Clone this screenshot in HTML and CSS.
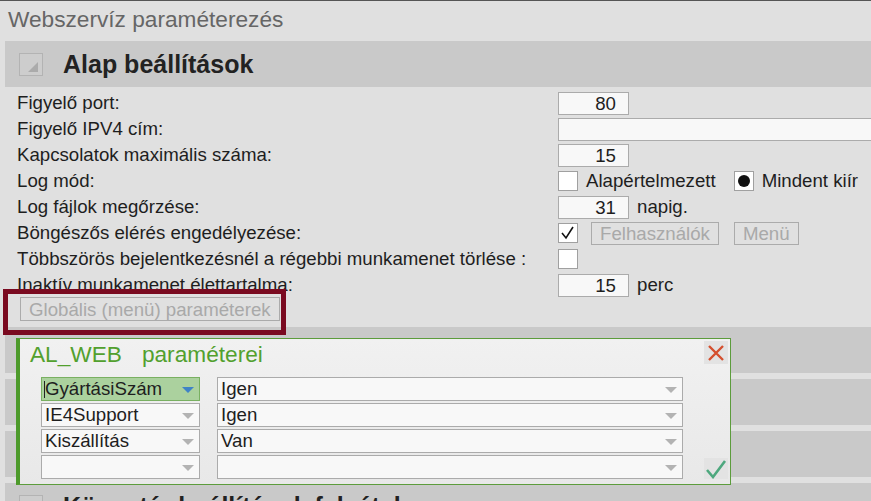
FILE: index.html
```html
<!DOCTYPE html>
<html lang="hu">
<head>
    <meta charset="UTF-8">
    <title>Webszervíz paraméterezés</title>
    <link rel="stylesheet" href="styles.css">
</head>
<body>
    <div class="page-title">Webszervíz paraméterezés</div>

    <div class="panels">
        <section class="panel">
            <div class="panel-head"><span class="toggle"></span><h2>Alap beállítások</h2></div>
            <div class="panel-body">
                <div class="row">
                    <span class="lbl">Figyelő port:</span>
                    <div class="ctrl"><span class="field num">80</span></div>
                </div>
                <div class="row">
                    <span class="lbl">Figyelő IPV4 cím:</span>
                    <div class="ctrl"><span class="field wide"></span></div>
                </div>
                <div class="row">
                    <span class="lbl">Kapcsolatok maximális száma:</span>
                    <div class="ctrl"><span class="field num">15</span></div>
                </div>
                <div class="row">
                    <span class="lbl">Log mód:</span>
                    <div class="ctrl">
                        <span class="box"></span>
                        <span class="opt">Alapértelmezett</span>
                        <span class="box radio"><span class="dot"></span></span>
                        <span>Mindent kiír</span>
                    </div>
                </div>
                <div class="row">
                    <span class="lbl">Log fájlok megőrzése:</span>
                    <div class="ctrl"><span class="field num">31</span><span>napig.</span></div>
                </div>
                <div class="row">
                    <span class="lbl">Böngészős elérés engedélyezése:</span>
                    <div class="ctrl">
                        <span class="box">
                            <svg width="18" height="18" viewBox="0 0 18 18"><polyline points="3,9 7,14 14,3" fill="none" stroke="#111" stroke-width="1.6"/></svg>
                        </span>
                        <button class="ghost-btn users">Felhasználók</button>
                        <button class="ghost-btn">Menü</button>
                    </div>
                </div>
                <div class="row">
                    <span class="lbl">Többszörös bejelentkezésnél a régebbi munkamenet törlése :</span>
                    <div class="ctrl"><span class="box"></span></div>
                </div>
                <div class="row">
                    <span class="lbl">Inaktív munkamenet élettartalma:</span>
                    <div class="ctrl"><span class="field num">15</span><span>perc</span></div>
                </div>
                <button class="ghost-btn global">Globális (menü) paraméterek</button>
                <div class="highlight"></div>
            </div>
        </section>
        <section class="panel"><div class="panel-head"><span class="toggle"></span></div></section>
        <section class="panel"><div class="panel-head"><span class="toggle"></span></div></section>
        <section class="panel"><div class="panel-head"><span class="toggle"></span></div></section>
        <section class="panel"><div class="panel-head"><span class="toggle"></span><h2>Könyvtár beállítások felvétele</h2></div></section>
    </div>

    <div class="popup">
        <div class="popup-title"><span class="app">AL_WEB</span>paraméterei</div>
        <button class="icon-btn close">
            <svg width="20" height="20" viewBox="0 0 20 20"><path d="M3 3 L17 17 M17 3 L3 17" stroke="#d5502f" stroke-width="2.4"/></svg>
        </button>
        <div class="param-rows">
            <div class="select key active"><span class="caret"></span>GyártásiSzám<span class="arrow"></span></div>
            <div class="select val">Igen<span class="arrow"></span></div>
            <div class="select key">IE4Support<span class="arrow"></span></div>
            <div class="select val">Igen<span class="arrow"></span></div>
            <div class="select key">Kiszállítás<span class="arrow"></span></div>
            <div class="select val">Van<span class="arrow"></span></div>
            <div class="select key"><span class="arrow"></span></div>
            <div class="select val"><span class="arrow"></span></div>
        </div>
        <button class="icon-btn ok">
            <svg width="22" height="20" viewBox="0 0 22 20"><polyline points="2,11 8,18 20,2" fill="none" stroke="#4ea87e" stroke-width="2.6"/></svg>
        </button>
    </div>
</body>
</html>
```

FILE: styles.css
```css
*{
    box-sizing: border-box;
}
body{
    margin: 0;
    width: 871px;
    height: 501px;
    overflow: hidden;
    position: relative;
    background-color: #e0e0e0;
    border-top: 1px solid #555;
    font-family: "Liberation Sans", Arial, sans-serif;
    font-size: 18.67px;
    color: #1e1e1e;
}
.page-title{
    height: 40px;
    line-height: 37px;
    padding-left: 8px;
    font-size: 22.67px;
    color: #666;
}
.panels{
    display: flex;
    flex-direction: column;
    gap: 6px;
    padding-left: 5px;
}
.panel-head{
    height: 46px;
    background-color: #c9c9c9;
    display: flex;
    align-items: center;
}
.toggle{
    position: relative;
    width: 24px;
    height: 23px;
    margin-left: 14px;
    margin-right: 20px;
    border: 1px solid #b3b3b3;
    background-color: #cdcdcd;
}
.toggle::after{
    content: "";
    position: absolute;
    right: 4px;
    bottom: 3px;
    border-left: 10px solid transparent;
    border-bottom: 10px solid #ababab;
}
.panel-head h2{
    margin: 0;
    font-size: 25px;
    font-weight: bold;
    color: #222;
}
.panel-body{
    position: relative;
    padding: 3px 0 0 12px;
}
.row{
    display: grid;
    grid-template-columns: 541px auto;
    align-items: center;
    height: 26px;
    white-space: nowrap;
}
.ctrl{
    display: flex;
    align-items: center;
}
.field{
    display: block;
    height: 23px;
    line-height: 21px;
    background-color: #f8f8f8;
    border: 1px solid #ababab;
}
.field.num{
    width: 71px;
    text-align: right;
    padding-right: 12px;
    margin-right: 8px;
}
.field.wide{
    width: 340px;
}
.box{
    display: flex;
    align-items: center;
    justify-content: center;
    width: 20px;
    height: 20px;
    background-color: #fff;
    border: 1px solid #a0a0a0;
}
.box + span{
    margin-left: 8px;
}
.opt{
    margin-right: 18px;
}
.dot{
    width: 12px;
    height: 12px;
    border-radius: 50%;
    background-color: #111;
}
.ghost-btn{
    height: 23px;
    padding: 0 8px;
    font-family: inherit;
    font-size: 18.67px;
    line-height: 21px;
    color: #a9a9a9;
    background-color: transparent;
    border: 1px solid #ababab;
}
.ghost-btn.users{
    margin-left: 13px;
    margin-right: 15px;
}
.ghost-btn.global{
    display: block;
    height: 24px;
    margin-left: 3px;
    margin-top: -1px;
}
.highlight{
    position: absolute;
    left: -2px;
    top: 202px;
    width: 283px;
    height: 46px;
    border: 5px solid #7a0a20;
}
.popup{
    position: absolute;
    left: 16px;
    top: 337px;
    width: 715px;
    height: 147px;
    border: 1px solid #5c9c3c;
    border-left: 4px solid #4d9a2b;
    background: linear-gradient(#f1f1f1, #e8e8e8);
}
.popup-title{
    line-height: 30px;
    padding-left: 10px;
    font-size: 22.67px;
    color: #52a02e;
}
.popup-title .app{
    margin-right: 20px;
}
.param-rows{
    display: grid;
    grid-template-columns: 159px 466px;
    column-gap: 17px;
    row-gap: 2px;
    margin-top: 8px;
    padding-left: 21px;
}
.select{
    position: relative;
    height: 24px;
    line-height: 22px;
    padding-left: 3px;
    background-color: #f8f8f8;
    border: 1px solid #ababab;
}
.arrow{
    position: absolute;
    right: 5px;
    top: 9px;
    border-left: 6px solid transparent;
    border-right: 6px solid transparent;
    border-top: 6px solid #b3b3b3;
}
.select.active{
    background-color: #abd19e;
    border-color: #79b061;
}
.select.active .arrow{
    border-top-color: #3f83c6;
}
.caret{
    position: absolute;
    left: 2px;
    top: 3px;
    width: 1px;
    height: 17px;
    background-color: #222;
}
.icon-btn{
    position: absolute;
    right: 2px;
    width: 24px;
    padding: 0;
    display: flex;
    align-items: center;
    justify-content: center;
    background-color: #e3e3e3;
    border: none;
}
.close{
    top: 2px;
    height: 23px;
}
.ok{
    bottom: 5px;
    height: 21px;
}
```
